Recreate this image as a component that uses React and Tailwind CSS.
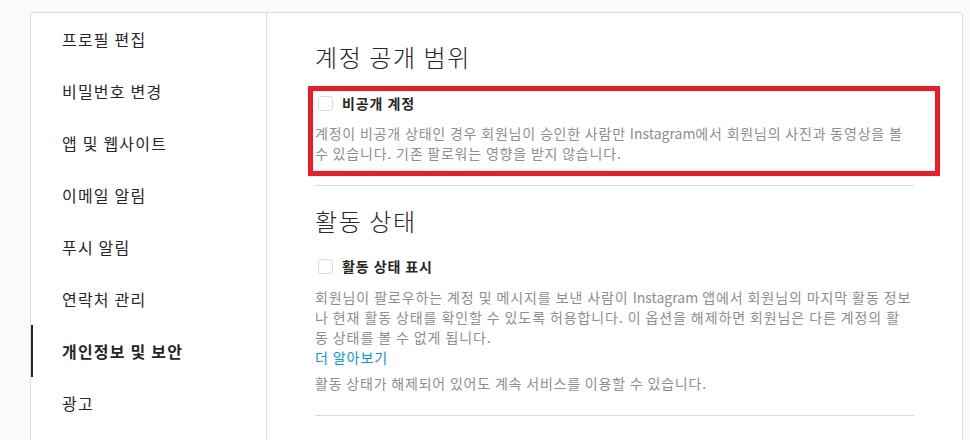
import React from 'react';

const menu = [
  '프로필 편집',
  '비밀번호 변경',
  '앱 및 웹사이트',
  '이메일 알림',
  '푸시 알림',
  '연락처 관리',
  '개인정보 및 보안',
  '광고',
];

function Check({ label }) {
  return (
    <label className="flex items-center h-[18px]">
      <span className="ml-[3px] w-[15px] h-[15px] rounded-[3px] border border-[#dbdbdb] bg-white" />
      <span className="ml-[9px] text-[14px] leading-[18px] tracking-[0.9px] font-semibold text-[#262626]">{label}</span>
    </label>
  );
}

export default function App() {
  return (
    <div
      className="w-[970px] h-[440px] overflow-hidden bg-[#fafafa] pt-3 pl-[30px]"
      style={{ fontFamily: '"Noto Sans CJK KR", "Noto Sans", sans-serif' }}
    >
      <div className="flex w-[933px] h-[600px] bg-white border border-[#dbdbdb] rounded-[3px]">
        {/* 사이드 메뉴 */}
        <ul className="w-[236px] shrink-0 border-r border-[#dbdbdb]">
          {menu.map((item) => {
            const active = item === '개인정보 및 보안';
            return (
              <li
                key={item}
                className={`h-[52px] flex items-center pl-[29px] border-l-2 text-[16px] leading-5 tracking-[1.2px] text-[#262626] ${
                  active ? 'border-[#262626] font-semibold' : 'border-transparent'
                }`}
              >
                {item}
              </li>
            );
          })}
        </ul>

        {/* 본문 */}
        <div className="flex-1 px-12 pt-[29px]">
          <h2 className="text-[24px] leading-[30px] tracking-[1.6px] font-light text-[#262626]">계정 공개 범위</h2>
          <div className="relative mt-[22px]">
            <Check label="비공개 계정" />
            <p className="mt-[11px] text-[14px] leading-5 tracking-[0.8px] text-[#8e8e8e]">
              계정이 비공개 상태인 경우 회원님이 승인한 사람만 <span className="tracking-normal">Instagram</span>에서 회원님의 사진과 동영상을 볼 수 있습니다. 기존 팔로워는 영향을 받지 않습니다.
            </p>
            <div className="absolute -left-[7px] -right-[26px] -top-[8px] -bottom-[13px] border-[5px] border-[#ed1c24] pointer-events-none" />
          </div>
          <div className="mt-[22px] border-t border-[#dbdbdb]" />

          <h2 className="mt-[20px] text-[24px] leading-[30px] tracking-[1.6px] font-light text-[#262626]">활동 상태</h2>
          <div className="mt-[21px]">
            <Check label="활동 상태 표시" />
            <p className="mt-[12px] text-[14px] leading-5 tracking-[0.9px] text-[#8e8e8e]">
              회원님이 팔로우하는 계정 및 메시지를 보낸 사람이 <span className="tracking-normal">Instagram</span> 앱에서 회원님의 마지막 활동 정보나 현재 활동 상태를 확인할 수 있도록 허용합니다. 이 옵션을 해제하면 회원님은 다른 계정의 활
              <br />
              동 상태를 볼 수 없게 됩니다.
              <br />
              <a className="text-[#0095f6]">더 알아보기</a>
            </p>
            <p className="mt-[6px] text-[14px] leading-5 tracking-[0.8px] text-[#8e8e8e]">
              활동 상태가 해제되어 있어도 계속 서비스를 이용할 수 있습니다.
            </p>
          </div>
          <div className="mt-[22px] border-t border-[#dbdbdb]" />
        </div>
      </div>
    </div>
  );
}
